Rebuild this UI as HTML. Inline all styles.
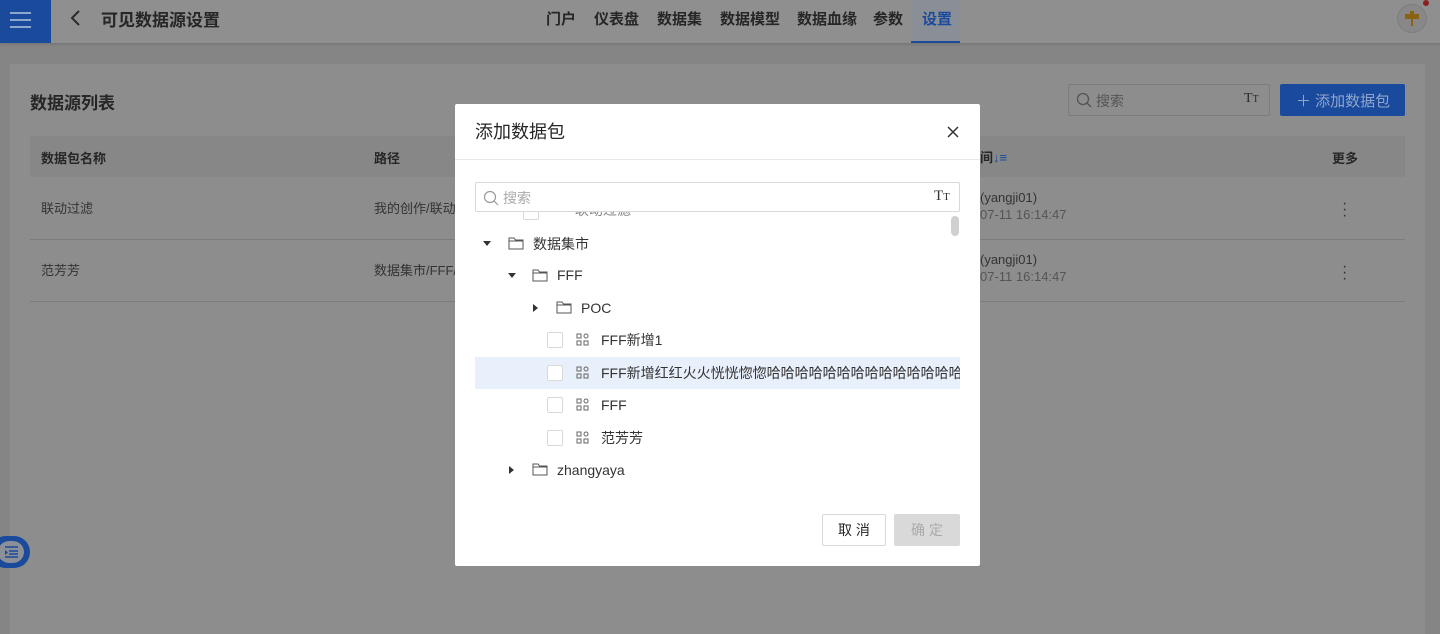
<!DOCTYPE html>
<html><head><meta charset="utf-8"><style>
*{box-sizing:border-box;margin:0;padding:0}
body{width:1440px;height:629px;overflow:hidden;background:#858585;font-family:"Liberation Sans","Noto Sans CJK SC",sans-serif;position:relative;color:#262626}
.hdr{position:absolute;left:0;top:0;width:1440px;height:43px;background:#8f8f8f;box-shadow:0 1px 3px rgba(0,0,0,.15)}
.menu{position:absolute;left:0;top:0;width:51px;height:43px;background:#1a4a9c}
.menu i{position:absolute;left:10px;width:21px;height:2px;background:#8fa6cc}
.a{position:absolute;white-space:nowrap}
.card{position:absolute;left:10px;top:64px;width:1415px;height:570px;background:#8d8d8d}
.th{position:absolute;left:30px;top:136px;width:1375px;height:41px;background:#878787}
.line{position:absolute;left:30px;width:1375px;height:1px;background:#7c7c7c}
.modal{position:absolute;left:455px;top:104px;width:525px;height:462px;background:#fff;border-radius:2px}
.cb{position:absolute;width:16px;height:16px;border:1px solid #d9d9d9;border-radius:2px;background:#fff}
.tri{position:absolute;width:0;height:0}
.down{border-left:4px solid transparent;border-right:4px solid transparent;border-top:5px solid #333}
.right{border-top:4px solid transparent;border-bottom:4px solid transparent;border-left:5px solid #333}
.t{font-size:14px;color:#333}
</style></head><body>
<div class="hdr"></div>
<div class="menu"><i style="top:12px"></i><i style="top:19px"></i><i style="top:26px"></i></div>
<svg class="a" style="left:68px;top:9px" width="14" height="18"><path d="M11 2 L4 9 L11 16" stroke="#2a2a2a" stroke-width="2" fill="none"/></svg>
<div class="a" style="left:101px;top:6px;font-size:17px;font-weight:bold;color:#262626">可见数据源设置</div>
<div class="a" style="left:546px;top:8px;font-size:15px;font-weight:bold;color:#262626">
<span style="position:absolute;left:0">门户</span><span style="position:absolute;left:48px">仪表盘</span><span style="position:absolute;left:111px">数据集</span><span style="position:absolute;left:174px">数据模型</span><span style="position:absolute;left:251px">数据血缘</span><span style="position:absolute;left:327px">参数</span></div>
<div class="a" style="left:911px;top:0;width:49px;height:43px;background:#8a8e96;border-bottom:2px solid #1a4a9c"></div>
<div class="a" style="left:922px;top:8px;font-size:15px;font-weight:bold;color:#1a4a9c">设置</div>
<div class="a" style="left:1397px;top:4px;width:30px;height:29px;border-radius:50%;background:#888;border:1px solid #7d7d7d"></div>
<svg class="a" style="left:1402px;top:10px" width="20" height="18"><path d="M3 4h14v5H3z M8 1h4v4H8z M9 9h2v7H9z" fill="#8a6210"/></svg>
<div class="a" style="left:1423px;top:0;width:6px;height:6px;border-radius:50%;background:#8a2020"></div>

<div class="card"></div>
<div class="a" style="left:30px;top:89px;font-size:17px;font-weight:bold">数据源列表</div>
<div class="a" style="left:1068px;top:84px;width:202px;height:32px;border:1px solid #7c7c7c;border-radius:2px"></div>
<svg class="a" style="left:1076px;top:92px" width="16" height="16"><circle cx="7" cy="7" r="5.5" stroke="#555" stroke-width="1.3" fill="none"/><path d="M11 11l4 4" stroke="#555" stroke-width="1.3"/></svg>
<div class="a" style="left:1096px;top:91px;font-size:14px;color:#555">搜索</div>
<div class="a" style="left:1244px;top:91px;font-size:14px;font-family:'Liberation Serif',serif;color:#2a2a2a">T<span style="font-size:10px">T</span></div>
<div class="a" style="left:1280px;top:84px;width:125px;height:32px;background:#1a4a9c;border-radius:2px"></div>
<div class="a" style="left:1296px;top:90px;font-size:15px;color:#8fa6cc">＋ 添加数据包</div>
<div class="th"></div>
<div class="a" style="left:41px;top:148px;font-size:13px;font-weight:bold">数据包名称</div>
<div class="a" style="left:374px;top:148px;font-size:13px;font-weight:bold">路径</div>
<div class="a" style="left:980px;top:147px;font-size:13px;font-weight:bold">间<span style="color:#1a4a9c">↓≡</span></div>
<div class="a" style="left:1332px;top:148px;font-size:13px;font-weight:bold">更多</div>
<div class="a" style="left:41px;top:198px;font-size:13px;color:#333">联动过滤</div>
<div class="a" style="left:374px;top:198px;font-size:13px;color:#333">我的创作/联动过</div>
<div class="a" style="left:980px;top:190px;font-size:13px;color:#333">(yangji01)</div>
<div class="a" style="left:980px;top:207px;font-size:13px;color:#555">07-11 16:14:47</div>
<div class="a" style="left:1342px;top:201px;font-size:16px;line-height:6px;color:#333">·<br>·<br>·</div>
<div class="line" style="top:239px"></div>
<div class="a" style="left:41px;top:260px;font-size:13px;color:#333">范芳芳</div>
<div class="a" style="left:374px;top:260px;font-size:13px;color:#333">数据集市/FFF/范</div>
<div class="a" style="left:980px;top:252px;font-size:13px;color:#333">(yangji01)</div>
<div class="a" style="left:980px;top:269px;font-size:13px;color:#555">07-11 16:14:47</div>
<div class="a" style="left:1342px;top:264px;font-size:16px;line-height:6px;color:#333">·<br>·<br>·</div>
<div class="line" style="top:301px"></div>

<div class="a" style="left:-10px;top:536px;width:40px;height:32px;border-radius:16px;background:#1a4a9c"></div>
<div class="a" style="left:-2px;top:541px;width:26px;height:22px;border-radius:11px;background:#8a8f98"></div>
<svg class="a" style="left:2px;top:544px" width="18" height="16"><path d="M3 3h13M7 7h9M7 10h9M3 13h13" stroke="#1a4a9c" stroke-width="1.5"/><path d="M3 6l3 2.5-3 2.5z" fill="#1a4a9c"/></svg>

<div class="modal">
 <div class="a" style="left:20px;top:14px;font-size:18px;color:#262626">添加数据包</div>
 <svg class="a" style="left:492px;top:22px" width="12" height="12"><path d="M1 1l10 10M11 1L1 11" stroke="#333" stroke-width="1.5"/></svg>
 <div class="a" style="left:0;top:55px;width:525px;height:1px;background:#e8e8e8"></div>
 <div class="a" style="left:20px;top:78px;width:485px;height:30px;border:1px solid #d9d9d9;border-radius:2px;background:#fff;z-index:2"></div>
 <svg class="a" style="left:28px;top:86px;z-index:3" width="16" height="16"><circle cx="7" cy="7" r="5.5" stroke="#999" stroke-width="1.2" fill="none"/><path d="M11 11l4 4" stroke="#999" stroke-width="1.2"/></svg>
 <div class="a" style="left:48px;top:84px;font-size:14px;color:#aaa;z-index:3">搜索</div>
 <div class="a" style="left:479px;top:84px;font-size:15px;font-family:'Liberation Serif',serif;color:#333;z-index:3">T<span style="font-size:11px">T</span></div>
 <div class="a" style="left:20px;top:108px;width:485px;height:10px;overflow:hidden">
   <div class="cb" style="left:48px;top:-8px"></div>
   <div class="a t" style="left:100px;top:-12px;color:#888">联动过滤</div>
 </div>
 <div class="a" style="left:496px;top:112px;width:8px;height:20px;border-radius:4px;background:#d0d0d0"></div>
 <div class="tri down a" style="left:28px;top:137px"></div>
 <svg class="a" style="left:53px;top:132px" width="16" height="14"><path d="M1 2h5l1.5 2H15v9H1z M1 5h14" stroke="#555" fill="none"/></svg>
 <div class="a t" style="left:78px;top:130px">数据集市</div>
 <div class="tri down a" style="left:53px;top:169px"></div>
 <svg class="a" style="left:77px;top:164px" width="16" height="14"><path d="M1 2h5l1.5 2H15v9H1z M1 5h14" stroke="#555" fill="none"/></svg>
 <div class="a t" style="left:102px;top:163px">FFF</div>
 <div class="tri right a" style="left:78px;top:200px"></div>
 <svg class="a" style="left:101px;top:196px" width="16" height="14"><path d="M1 2h5l1.5 2H15v9H1z M1 5h14" stroke="#555" fill="none"/></svg>
 <div class="a t" style="left:126px;top:196px">POC</div>
 <div class="a" style="left:20px;top:253px;width:485px;height:32px;background:#e8f0fb"></div>
 <div class="cb" style="left:92px;top:228px"></div>
 <div class="cb" style="left:92px;top:261px"></div>
 <div class="cb" style="left:92px;top:293px"></div>
 <div class="cb" style="left:92px;top:326px"></div>
 <svg class="a" style="left:121px;top:229px" width="13" height="13"><g stroke="#666" fill="none"><rect x="1" y="1" width="4" height="4"/><rect x="8" y="1" width="4" height="4" rx="2"/><rect x="1" y="8" width="4" height="4"/><rect x="8" y="8" width="4" height="4"/></g></svg>
 <svg class="a" style="left:121px;top:262px" width="13" height="13"><g stroke="#666" fill="none"><rect x="1" y="1" width="4" height="4"/><rect x="8" y="1" width="4" height="4" rx="2"/><rect x="1" y="8" width="4" height="4"/><rect x="8" y="8" width="4" height="4"/></g></svg>
 <svg class="a" style="left:121px;top:294px" width="13" height="13"><g stroke="#666" fill="none"><rect x="1" y="1" width="4" height="4"/><rect x="8" y="1" width="4" height="4" rx="2"/><rect x="1" y="8" width="4" height="4"/><rect x="8" y="8" width="4" height="4"/></g></svg>
 <svg class="a" style="left:121px;top:327px" width="13" height="13"><g stroke="#666" fill="none"><rect x="1" y="1" width="4" height="4"/><rect x="8" y="1" width="4" height="4" rx="2"/><rect x="1" y="8" width="4" height="4"/><rect x="8" y="8" width="4" height="4"/></g></svg>
 <div class="a t" style="left:146px;top:226px">FFF新增1</div>
 <div class="a t" style="left:146px;top:259px;width:359px;overflow:hidden">FFF新增红红火火恍恍惚惚哈哈哈哈哈哈哈哈哈哈哈哈哈哈</div>
 <div class="a t" style="left:146px;top:293px">FFF</div>
 <div class="a t" style="left:146px;top:324px">范芳芳</div>
 <div class="tri right a" style="left:54px;top:362px"></div>
 <svg class="a" style="left:77px;top:358px" width="16" height="14"><path d="M1 2h5l1.5 2H15v9H1z M1 5h14" stroke="#555" fill="none"/></svg>
 <div class="a t" style="left:102px;top:358px">zhangyaya</div>
 <div class="a" style="left:367px;top:410px;width:64px;height:32px;border:1px solid #d9d9d9;border-radius:2px;text-align:center;line-height:30px;font-size:14px;color:#262626">取 消</div>
 <div class="a" style="left:439px;top:410px;width:66px;height:32px;background:#d9d9d9;border-radius:2px;text-align:center;line-height:32px;font-size:14px;color:#aaa">确 定</div>
</div>
</body></html>
